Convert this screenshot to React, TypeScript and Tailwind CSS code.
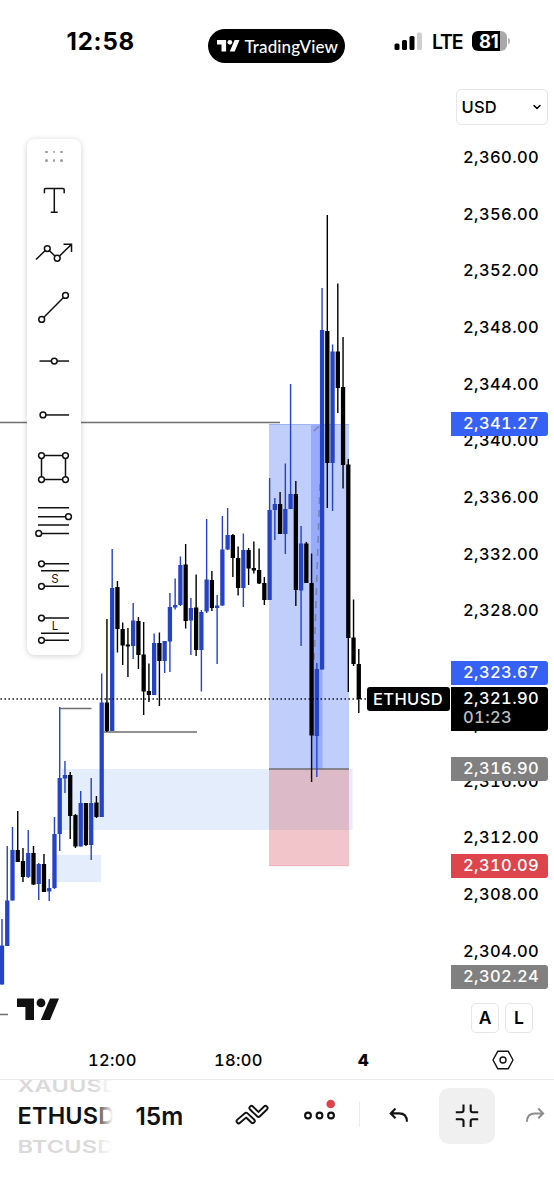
import React from 'react';
import { ChevronDown } from 'lucide-react';

type Candle = [up: 0 | 1, high: number, top: number, bottom: number, low: number];

const STEP = 5.247;
const TICK_HEIGHT = 56.7;

const candles: Candle[] = [
    [1, 919, 945.5, 984.5, 984.5],
    [1, 846, 900.5, 946, 946],
    [1, 827, 850, 900.5, 900.5],
    [0, 811, 850, 862, 862],
    [0, 848, 861, 877, 882],
    [1, 830, 853, 877, 878],
    [0, 846, 853, 884.5, 885],
    [1, 863, 864, 884, 900],
    [0, 854, 864, 892, 892],
    [1, 879, 888, 891.5, 901],
    [1, 817, 834, 888, 889],
    [1, 707, 778, 834, 851],
    [1, 761, 775, 778.5, 793],
    [0, 772, 775, 816, 839],
    [0, 814, 815, 846.5, 848],
    [1, 791, 803, 846.5, 846.5],
    [0, 803, 803, 845, 846],
    [1, 778, 803, 845, 860],
    [0, 796, 802.5, 817, 818],
    [1, 673.5, 702.5, 817, 817],
    [0, 619, 702.5, 731, 732],
    [1, 549, 588, 731, 731],
    [0, 581, 587, 629, 652.5],
    [0, 622.5, 629, 645.5, 665],
    [0, 628, 644.5, 646.5, 677],
    [1, 603, 620.5, 646, 659],
    [0, 617, 621, 655, 669],
    [0, 622, 654.5, 691.5, 715],
    [0, 663.5, 691, 695, 702],
    [1, 633.5, 643, 695, 695],
    [0, 632.5, 643, 661, 706],
    [1, 641, 641, 661, 673],
    [1, 593, 607, 641.5, 672],
    [1, 578.5, 605, 607.5, 609.5],
    [1, 556.5, 565, 605, 606],
    [0, 544, 564.5, 621, 628.5],
    [1, 598, 608, 620.5, 655],
    [0, 574.5, 607.5, 650, 656],
    [1, 610, 612, 650, 691.5],
    [1, 519, 579.5, 611.5, 613],
    [0, 571, 580, 608, 611],
    [1, 595, 605.5, 608, 664],
    [1, 516, 549.5, 605.5, 606],
    [1, 508, 535, 549.5, 550],
    [0, 534, 535, 558, 577],
    [0, 546.5, 558, 588, 595.5],
    [1, 533.5, 550, 588, 607],
    [0, 548, 550, 568.5, 585],
    [0, 541.5, 568, 570.5, 573.5],
    [0, 548.5, 570, 583.5, 584],
    [0, 577, 583, 600, 605],
    [1, 478, 510, 600, 600],
    [1, 498, 504, 510, 540],
    [0, 492, 504, 534, 534],
    [1, 463.5, 509, 534, 554],
    [1, 384, 494, 509, 509],
    [0, 481, 494, 590, 606],
    [1, 526, 543.5, 590.5, 646],
    [0, 542, 543.5, 583, 583],
    [0, 553.5, 583, 735.5, 782],
    [1, 663, 669, 736, 777],
    [1, 288, 330, 669.5, 669.5],
    [0, 215, 331, 463, 508],
    [1, 344.5, 351.5, 463, 511],
    [0, 283.5, 351.5, 388, 413],
    [0, 337, 387, 465, 488.5],
    [0, 459, 464.5, 638, 692],
    [0, 599.5, 637.5, 664, 666],
    [0, 649, 664, 699, 713],
];

const ticks = [
    '2,360.00', '2,356.00', '2,352.00', '2,348.00', '2,344.00',
    '2,340.00', '2,336.00', '2,332.00', '2,328.00', '2,324.00',
    '2,320.00', '2,316.00', '2,312.00', '2,308.00', '2,304.00',
];

const TVLogo: React.FC<{ className: string }> = ({ className }) => (
    <svg className={className} viewBox="0 0 42 21.5" fill="currentColor">
        <path d="M0 0h17v21.5H8.4V8.5H0z" />
        <circle cx="24" cy="4.4" r="4.4" />
        <path d="M33 0h9l-9 21.5h-9.2z" />
    </svg>
);

const StatusBar: React.FC = () => (
    <header className="flex h-20 shrink-0 items-start">
        <div className="mt-[23px] w-[208px] pl-[66.5px] text-[24px] leading-[37px] font-bold tracking-[0.8px]">12:58</div>
        <div className="mt-[29px] flex h-[34px] w-[137px] items-center rounded-full bg-black pl-[9px] text-white">
            <TVLogo className="h-[11.5px] w-[22.5px]" />
            <span className="ml-[5px] font-['Lato'] text-[17px] leading-none font-medium tracking-[0.1px]">TradingView</span>
        </div>
        <svg className="mt-[31px] ml-[49px] h-5 w-7" viewBox="394 31 28 20">
            <rect x="394.5" y="43.5" width="5" height="6.5" rx="1.5" />
            <rect x="402" y="40" width="5" height="10" rx="1.5" />
            <rect x="409.5" y="36" width="5" height="14" rx="1.5" />
            <rect x="417" y="32.5" width="5" height="17.5" rx="1.5" fill="#cfcfcf" />
        </svg>
        <div className="mt-[27px] ml-[10px] w-[40px] text-[19.5px] leading-[30px] font-semibold tracking-[-1.2px]">LTE</div>
        <div className="mt-[31px] flex h-5 w-[35px] items-center overflow-hidden rounded-[6px] bg-[linear-gradient(to_right,#000_80%,#a9a9a9_80%)] pl-[7px] text-[18.5px] leading-none font-bold tracking-[-0.4px] text-white">
            81
        </div>
        <div className="mt-[38px] ml-px h-[6px] w-[2px] rounded-r-full bg-[#b5b5b5]" />
    </header>
);

const Chart: React.FC = () => (
    <svg className="h-[960px] w-[451px] shrink-0" viewBox="0 80 451 960">
        <rect x="62" y="769" width="290.5" height="61" fill="#e3edfc" />
        <rect x="56" y="855" width="45" height="27" fill="#e3edfc" />
        <rect x="269" y="424" width="80" height="345" fill="#c0cefb" />
        <rect x="311" y="424" width="11.5" height="345" fill="#97abfa" />
        <rect x="269" y="769" width="80" height="97" fill="#f1c5c9" />
        <rect x="269" y="769" width="80" height="61" fill="#ddbac8" />
        <path d="M269 424.5h80" stroke="#9fb2f5" />
        <path d="M269 865.7h80" stroke="#f0b2b7" />
        <path d="M0 422.5h280M60 708.5h31.5M104 732h93M0 1014.5h8M269 769h80" stroke="#6f6f6f" strokeWidth="1.3" />
        <path d="M314 431l4-4h8M320 484l-6 178" stroke="#7b86a8" strokeWidth="1.6" strokeDasharray="7 6" fill="none" />
        {candles.map(([up, high, top, bottom, low], i) => {
            const x = 2 + i * STEP;
            return (
                <g key={i} fill={up ? '#2543c6' : '#000'}>
                    <rect x={x - 0.7} y={high} width="1.4" height={low - high} />
                    <rect x={x - 2.15} y={top} width="4.3" height={bottom - top} />
                </g>
            );
        })}
        <path d="M0.5 699H366" stroke="#000" strokeWidth="1.4" strokeDasharray="1.4 2.6" />
        <g transform="translate(17 998.5)" fill="#111">
            <path d="M0 0h17v21.5H8.4V8.5H0z" />
            <circle cx="24" cy="4.4" r="4.4" />
            <path d="M33 0h9l-9 21.5h-9.2z" />
        </g>
    </svg>
);

const Tool: React.FC<{ children: React.ReactNode }> = ({ children }) => (
    <svg className="h-[53.5px] w-[54px] shrink-0" viewBox="-27 -26.75 54 53.5" fill="none" stroke="#111" strokeWidth="1.5">
        {children}
    </svg>
);

const Knob: React.FC<{ x: number; y: number }> = ({ x, y }) => <circle cx={x} cy={y} r="2.9" fill="#fff" />;

const Toolbar: React.FC = () => (
    <div className="absolute top-[139px] left-[27px] flex w-[54px] flex-col rounded-[8px] bg-white shadow-[0_1px_6px_rgba(0,0,0,0.18)]">
        <div className="flex h-[34.5px] items-center justify-center">
            <div className="grid grid-cols-3 gap-x-[5px] gap-y-[6px]">
                {[0, 1, 2, 3, 4, 5].map((n) => (
                    <span key={n} className="size-[2.4px] rounded-full bg-[#9c9c9c]" />
                ))}
            </div>
        </div>
        <Tool>
            <path d="M-9.6-7.6v-3.4q0-1.2 1.2-1.2H9q1.2 0 1.2 1.2v3.4M.3-12.2V11.6M-3.3 11.6h7" />
        </Tool>
        <Tool>
            <path d="M-18 5.8L-6.7-5.2 3.2 4.5 17.3-9.2M9.5-9.4h8v7.6" />
            <Knob x={-6.7} y={-5.2} />
            <Knob x={3.2} y={4.5} />
        </Tool>
        <Tool>
            <path d="M-12.3 11.7L11.5-12.3" />
            <Knob x={-12.3} y={11.7} />
            <Knob x={11.5} y={-12.3} />
        </Tool>
        <Tool>
            <path d="M-14.5.3H15" />
            <Knob x={0.3} y={0.3} />
        </Tool>
        <Tool>
            <path d="M-11 .2H15" />
            <Knob x={-11} y={0.2} />
        </Tool>
        <Tool>
            <path d="M-12.5-12.2h24v24h-24z" />
            <Knob x={-12.5} y={-12.2} />
            <Knob x={11.5} y={-12.2} />
            <Knob x={-12.5} y={11.8} />
            <Knob x={11.5} y={11.8} />
        </Tool>
        <Tool>
            <path d="M-16-13.9h31M-16-5.1h31M-16 3.3h31M-16 11.7h31" />
            <Knob x={14.5} y={-5.1} />
            <Knob x={-15.3} y={11.7} />
        </Tool>
        <Tool>
            <path d="M-12-10.9h27M-13-3.9h28M-12 11.6h27" />
            <Knob x={-12.5} y={-10.9} />
            <Knob x={-12.5} y={11.6} />
            <text x="1" y="8" textAnchor="middle" fill="#111" stroke="none" className="text-[11.5px]">S</text>
        </Tool>
        <Tool>
            <path d="M-12-10.7h27M-13 4.6h28M-12 11.6h27" />
            <Knob x={-12.5} y={-10.7} />
            <Knob x={-12.5} y={11.6} />
            <text x="1" y="1" textAnchor="middle" fill="#111" stroke="none" className="text-[11.5px]">L</text>
        </Tool>
    </div>
);

const PriceAxis: React.FC = () => (
    <div className="flex w-[103px] flex-col">
        <div className="h-[49px] shrink-0 pt-[9px] pl-[4.5px]">
            <div className="flex h-9 w-[92px] items-center justify-between rounded-[5px] border border-[#e6e6e6] pr-[4px] pl-[5px] text-[16.5px] font-medium tracking-[0.2px]">
                USD
                <ChevronDown size={12} strokeWidth={3} />
            </div>
        </div>
        {ticks.map((tick) => (
            <div key={tick} className="flex shrink-0 items-center pl-[12px] text-[16.5px] font-medium tracking-[0.4px] tabular-nums" style={{ height: TICK_HEIGHT }}>
                {tick}
            </div>
        ))}
        <div className="mt-[24px] flex gap-[6px] pl-[20px] text-[17.5px] font-semibold">
            <div className="flex h-[30px] w-7 items-center justify-center rounded-[5px] border border-[#e6e6e6]">A</div>
            <div className="flex h-[30px] w-7 items-center justify-center rounded-[5px] border border-[#e6e6e6]">L</div>
        </div>
    </div>
);

const tagClass = 'absolute left-[451px] h-[24px] w-[97px] rounded-r-[3px] pl-[12px] text-[16.5px] leading-[23px] font-medium tracking-[0.4px] tabular-nums text-white';

const PriceTags: React.FC = () => (
    <>
        <div className={`${tagClass} top-[412px] bg-[#3661f5]`}>2,341.27</div>
        <div className={`${tagClass} top-[661px] bg-[#3661f5]`}>2,323.67</div>
        <div className="absolute top-[687px] left-[451px] h-[43.5px] w-[97px] rounded-r-[3px] bg-black pl-[12px] text-[16.5px] leading-[23px] font-medium tracking-[0.4px] tabular-nums text-white">
            <div className="h-[20px]">2,321.90</div>
            <div className="leading-[21px] text-[#bdbdbd]">01:23</div>
        </div>
        <div className="absolute top-[687px] left-[366.5px] h-[24px] w-[83px] rounded-[3px] bg-black text-center text-[16.5px] leading-[24.5px] font-medium tracking-[0.4px] text-white">
            ETHUSD
        </div>
        <div className={`${tagClass} top-[757px] bg-[#808080]`}>2,316.90</div>
        <div className={`${tagClass} top-[854px] bg-[#de444b]`}>2,310.09</div>
        <div className={`${tagClass} top-[965px] bg-[#808080]`}>2,302.24</div>
    </>
);

const TimeAxis: React.FC = () => (
    <div className="flex h-[39px] shrink-0 items-center text-[16.5px] font-medium tracking-[0.3px] tabular-nums">
        <span className="mt-[2px] ml-[88px] w-[126px]">12:00</span>
        <span className="mt-[2px] w-[144px]">18:00</span>
        <span className="mt-[2px] w-[133.5px] font-extrabold">4</span>
        <svg className="h-5 w-[22px]" viewBox="-11 -10 22 20" fill="none" stroke="#111" strokeWidth="1.4">
            <path d="M-5.3-8.7H5.3L10 0 5.3 8.7H-5.3L-10 0z" strokeLinejoin="round" />
            <circle r="3" />
        </svg>
    </div>
);

const BottomBar: React.FC = () => (
    <footer className="flex h-[121px] items-start border-t border-[#ededed]">
        <div className="relative flex h-20 w-[113px] shrink-0 flex-col overflow-hidden pl-[17.5px] text-[23.5px] leading-[28px] font-semibold tracking-[0.2px]">
            <span className="-mt-[8px] h-[30px] shrink-0 scale-y-75 text-[#dadada]">XAUUSD</span>
            <span className="h-[30.5px] shrink-0 text-[#111]">ETHUSD</span>
            <span className="h-[28px] shrink-0 scale-y-75 text-[#dadada]">BTCUSD</span>
            <div className="absolute top-0 right-0 h-full w-4 bg-gradient-to-r from-white/20 to-white" />
        </div>
        <div className="mt-[21px] w-[121px] pl-[22.5px] text-[24.5px] leading-[31px] font-semibold text-[#111]">15m</div>
        <svg className="mt-[23px] h-6 w-9" viewBox="234 1103 36 24" fill="none" strokeLinecap="round" strokeLinejoin="round">
            <path d="M238.7 1121.2L246.2 1114.8L252.7 1121M251.5 1108L258.5 1114.8L265.5 1108" stroke="#111" strokeWidth="6" />
            <path d="M238.7 1121.2L246.2 1114.8L252.7 1121M251.5 1108L258.5 1114.8L265.5 1108" stroke="#fff" strokeWidth="2.2" />
        </svg>
        <svg className="mt-[18px] ml-[32px] h-6 w-9" viewBox="302 1098 36 24" fill="none" stroke="#111" strokeWidth="2.1">
            <circle cx="308" cy="1115.5" r="2.9" />
            <circle cx="319.5" cy="1115.5" r="2.9" />
            <circle cx="331" cy="1115.5" r="2.9" />
            <circle cx="330.7" cy="1104" r="4.3" fill="#df444b" stroke="none" />
        </svg>
        <div className="mt-[22px] ml-[21px] h-[25px] w-px bg-[#ececec]" />
        <svg className="mt-[25px] ml-[28px] h-5 w-[22px]" viewBox="388 1105 22 20" fill="none" stroke="#111" strokeWidth="2.1">
            <path d="M395.5 1108.5L390.7 1113.4L395.5 1118.3M391 1113.4H399Q406.9 1113.4 406.9 1121.7" />
        </svg>
        <div className="mt-[7.5px] ml-[28.5px] flex size-14 items-center justify-center rounded-[10px] bg-[#f0f0f0]">
            <svg className="size-6" viewBox="-12 -12 24 24" fill="none" stroke="#111" strokeWidth="2.1">
                <path d="M-11.2-3.7h5.7q2 0 2-2v-5.8M11.2-3.7H5.7q-2 0-2-2v-5.8M-11.2 3.3h5.7q2 0 2 2v5.8M11.2 3.3H5.7q-2 0-2 2v5.8" />
            </svg>
        </div>
        <svg className="mt-[25px] ml-[29.5px] h-5 w-[22px]" viewBox="524 1105 22 20" fill="none" stroke="#8c8c8c" strokeWidth="2">
            <path d="M538.3 1108.5L543.1 1113.4L538.3 1118.3M543 1113.4H535Q527 1113.4 527 1121.7" />
        </svg>
    </footer>
);

const App: React.FC = () => {
    return (
        <div className="relative flex h-[1200px] w-[554px] flex-col overflow-hidden bg-white font-['Inter',sans-serif] text-black">
            <StatusBar />
            <main className="flex h-[960px] shrink-0">
                <Chart />
                <PriceAxis />
            </main>
            <TimeAxis />
            <BottomBar />
            <PriceTags />
            <Toolbar />
        </div>
    );
};

export default App;
